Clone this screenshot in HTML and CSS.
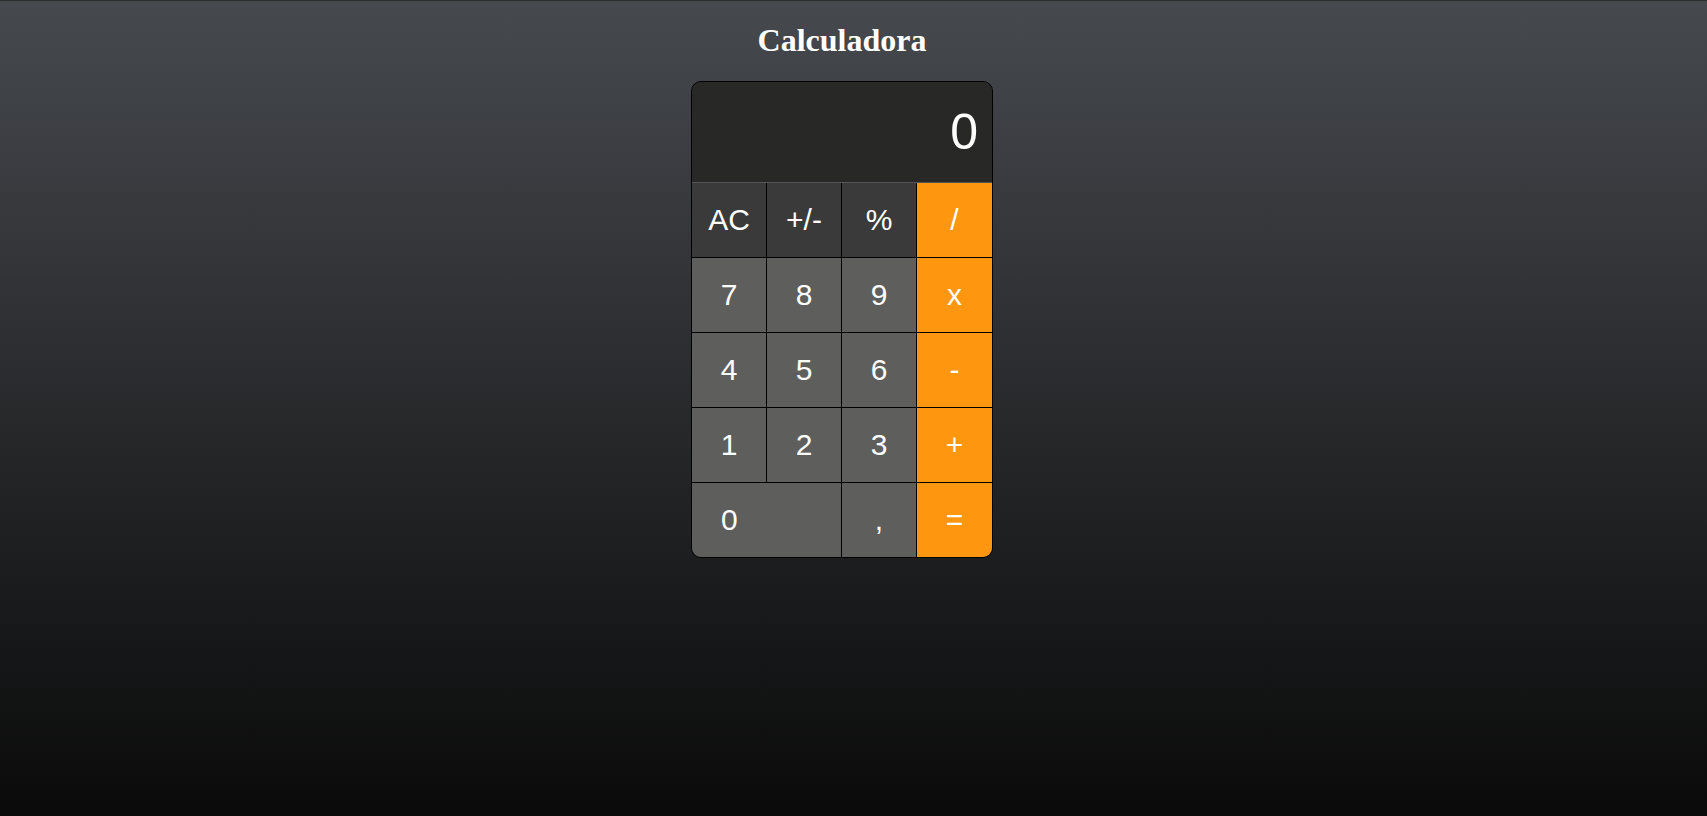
FILE: index.html
```html
<!DOCTYPE html>
<html lang="pt">
<head>
<meta charset="utf-8">
<title>Calculadora</title>
<link rel="stylesheet" href="styles.css">
</head>
<body>
<h1 class="title">Calculadora</h1>
<div class="calc">
  <div class="display">0</div>
  <div class="keys">
    <div class="key fn">AC</div>
    <div class="key fn">+/-</div>
    <div class="key fn">%</div>
    <div class="key op">/</div>
    <div class="key num">7</div>
    <div class="key num">8</div>
    <div class="key num">9</div>
    <div class="key op">x</div>
    <div class="key num">4</div>
    <div class="key num">5</div>
    <div class="key num">6</div>
    <div class="key op">-</div>
    <div class="key num">1</div>
    <div class="key num">2</div>
    <div class="key num">3</div>
    <div class="key op">+</div>
    <div class="key num zero last">0</div>
    <div class="key num last">,</div>
    <div class="key op last">=</div>
  </div>
</div>
</body>
</html>
```
FILE: styles.css
```css
html {
  min-height: 100%;
  border-top: 1px solid #2c2d2f;
  background: linear-gradient(to bottom, #46494e 0%, #0a0a0a 100%);
  background-attachment: fixed;
}
body {
  margin: 0 23px 0 0;
  padding: 0;
  min-height: 815px;
  font-family: "Liberation Sans", Arial, sans-serif;
}
.title {
  font-family: "Liberation Serif", "Times New Roman", serif;
  font-size: 32px;
  font-weight: bold;
  color: #ffffff;
  text-align: center;
  margin: 21.44px 0;
}
.calc {
  width: 300px;
  margin: 0 auto;
  border: 1px solid #000;
  border-radius: 10px;
  overflow: hidden;
  background: #282826;
}
.display {
  height: 100px;
  box-sizing: content-box;
  border-bottom: 1px solid #555555;
  background: #282826;
  color: #ffffff;
  font-size: 50px;
  display: flex;
  align-items: center;
  justify-content: flex-end;
  padding-right: 14px;
}
.keys {
  display: grid;
  grid-template-columns: repeat(4, 75px);
  grid-template-rows: 75px 75px 75px 75px 74px;
}
.key {
  box-sizing: border-box;
  border-right: 1px solid #000;
  border-bottom: 1px solid #000;
  color: #ffffff;
  font-size: 30px;
  display: flex;
  align-items: center;
  justify-content: center;
}
.key.op {
  border-right: none;
  background: #ff9610;
}
.key.fn {
  background: #3a3a3a;
}
.key.num {
  background: #5e5e5c;
}
.key.last {
  border-bottom: none;
}
.key.zero {
  grid-column: span 2;
  justify-content: flex-start;
  padding-left: 29px;
}
```
